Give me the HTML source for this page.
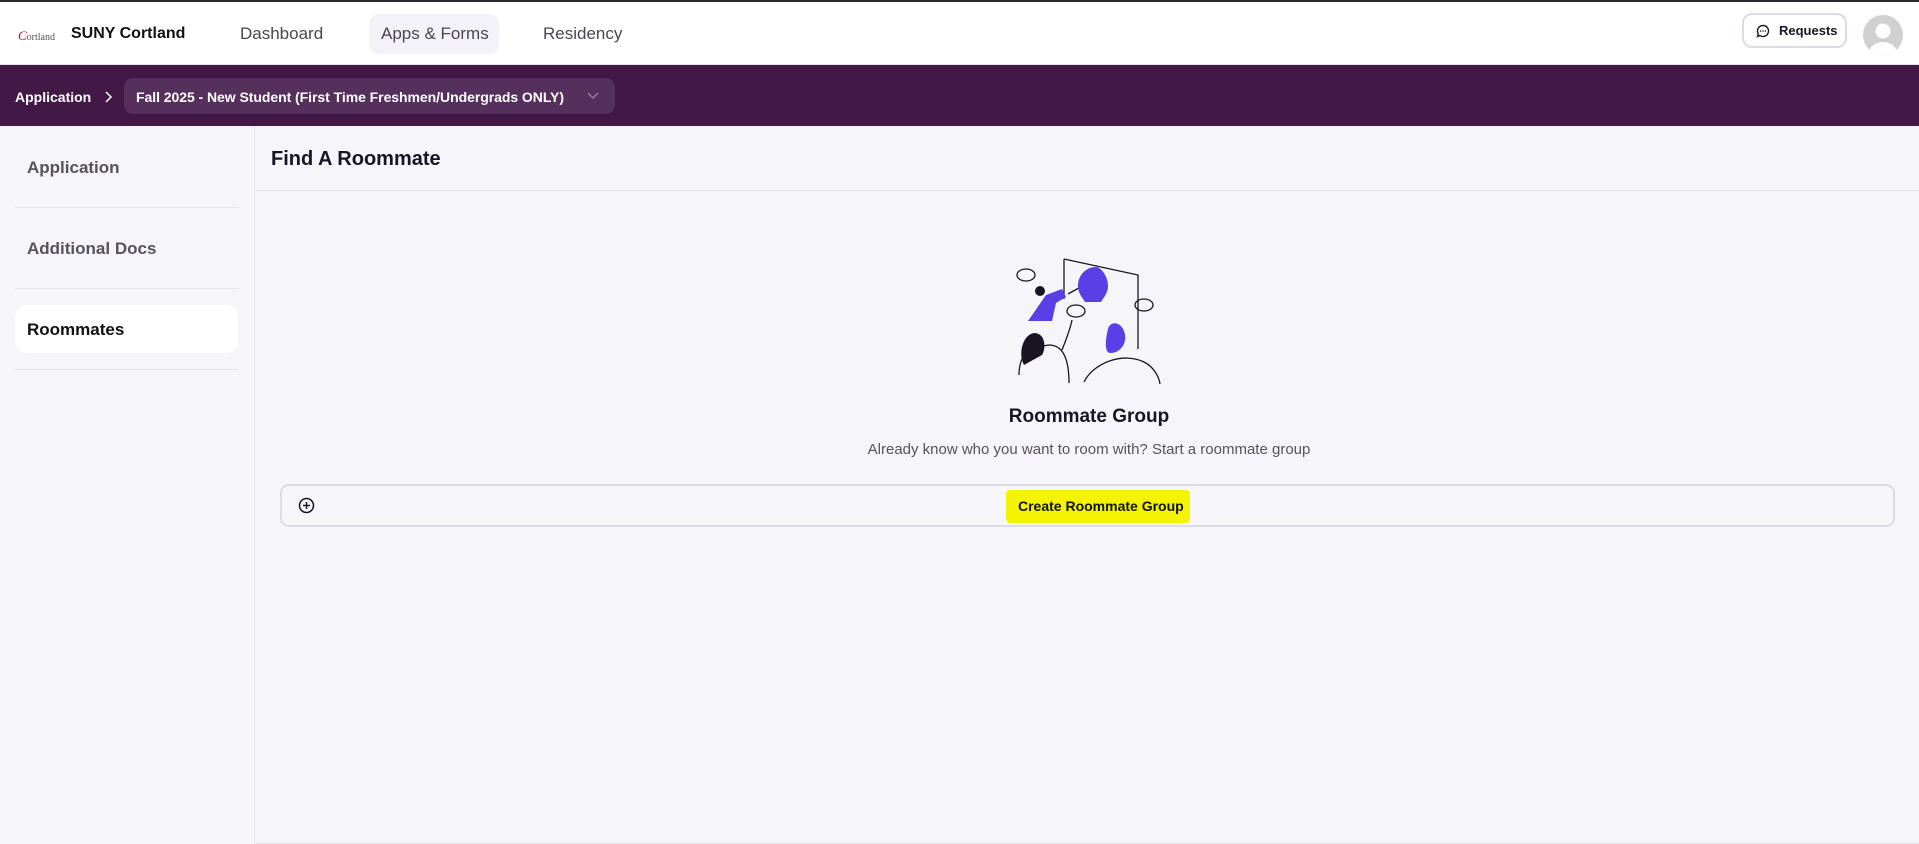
<!DOCTYPE html>
<html><head><meta charset="utf-8"><style>
*{box-sizing:border-box;margin:0;padding:0}
body{width:1919px;height:844px;overflow:hidden;background:#f5f5fa;font-family:"Liberation Sans",sans-serif;position:relative;color:#1a1523}
.top{position:absolute;left:0;top:0;width:1919px;height:65px;background:#fff;border-top:2px solid #2a2a2e;border-bottom:1px solid #e4e4ea}
.t{position:absolute;white-space:nowrap}
.purple{position:absolute;left:0;top:65px;width:1919px;height:61px;background:#421847}
.side{position:absolute;left:0;top:126px;width:255px;height:718px;border-right:1px solid #e4e4ea}
.line{position:absolute;height:1px;background:#e4e4ea}
</style></head><body>
<div class="top">
  <div class="t" style="left:18px;top:26px;font-family:'Liberation Serif',serif;font-size:10px;color:#555"><span style="color:#b0102a;font-style:italic;font-size:13px">C</span>ortland</div>
  <div class="t" style="left:71px;top:23px;font-size:16px;font-weight:bold;color:#111">SUNY Cortland</div>
  <div class="t" style="left:240px;top:22px;font-size:17px;color:#4a4550">Dashboard</div>
  <div style="position:absolute;left:369px;top:12px;width:130px;height:40px;border-radius:10px;background:#f3f2f8"></div>
  <div class="t" style="left:381px;top:22px;font-size:17px;color:#4a4550">Apps &amp; Forms</div>
  <div class="t" style="left:543px;top:22px;font-size:17px;color:#4a4550">Residency</div>
  <div style="position:absolute;left:1742px;top:11px;width:105px;height:35px;border:2px solid #dcdbe6;border-radius:10px;background:#fff"></div>
  <svg style="position:absolute;left:1756px;top:22px" width="14" height="14" viewBox="0 0 14 14"><path d="M7 1.5a5.5 5.5 0 1 1-3 10.1L1.5 12.5l.9-2.5A5.5 5.5 0 0 1 7 1.5z" fill="none" stroke="#1a1523" stroke-width="1.4"/><circle cx="4.6" cy="7" r=".8" fill="#1a1523"/><circle cx="7" cy="7" r=".8" fill="#1a1523"/><circle cx="9.4" cy="7" r=".8" fill="#1a1523"/></svg>
  <div class="t" style="left:1779px;top:21px;font-size:13px;font-weight:bold;color:#1a1523">Requests</div>
  <svg style="position:absolute;left:1863px;top:13px" width="40" height="40" viewBox="0 0 40 40"><defs><clipPath id="c"><circle cx="20" cy="20" r="20"/></clipPath></defs><circle cx="20" cy="20" r="20" fill="#d0d0d0"/><g clip-path="url(#c)" fill="#fff"><circle cx="20" cy="16" r="7.5"/><ellipse cx="20" cy="38" rx="14" ry="11"/></g></svg>
</div>
<div class="purple">
  <div class="t" style="left:15px;top:24px;font-size:14px;font-weight:bold;color:#fff">Application</div>
  <svg style="position:absolute;left:103px;top:26px" width="10" height="12" viewBox="0 0 10 12"><path d="M3 1l5 5-5 5" fill="none" stroke="#fff" stroke-width="1.5"/></svg>
  <div style="position:absolute;left:124px;top:13px;width:491px;height:36px;border-radius:9px;background:#55305c"></div>
  <div class="t" style="left:136px;top:24px;font-size:14px;font-weight:bold;color:#fff;letter-spacing:-0.05px">Fall 2025 - New Student (First Time Freshmen/Undergrads ONLY)</div>
  <svg style="position:absolute;left:587px;top:27px" width="12" height="8" viewBox="0 0 12 8"><path d="M1 1l5 5 5-5" fill="none" stroke="#9a86a0" stroke-width="1.3"/></svg>
</div>
<div class="side">
  <div class="t" style="left:27px;top:32px;font-size:17px;font-weight:bold;color:#57525c">Application</div>
  <div class="line" style="left:15px;top:81px;width:223px"></div>
  <div class="t" style="left:27px;top:113px;font-size:17px;font-weight:bold;color:#57525c">Additional Docs</div>
  <div class="line" style="left:15px;top:162px;width:223px"></div>
  <div style="position:absolute;left:15px;top:179px;width:223px;height:48px;border-radius:12px;background:#fff"></div>
  <div class="t" style="left:27px;top:194px;font-size:17px;font-weight:bold;color:#111">Roommates</div>
  <div class="line" style="left:15px;top:243px;width:223px"></div>
</div>
<div class="t" style="left:271px;top:148px;font-size:20px;font-weight:bold;color:#1a1523">Find A Roommate</div>
<div class="line" style="left:256px;top:190px;width:1663px"></div>
<svg style="position:absolute;left:1016px;top:255px" width="146" height="130" viewBox="0 0 146 130">
  <g fill="none" stroke="#1a1523" stroke-width="1.3">
    <path d="M48 4l74 16v74"/><path d="M48 4v40"/>
    <path d="M3 120c0-25 15-28 30-30 12 0 20 10 20 38"/><path d="M46 95c4-10 8-20 10-30"/>
    <path d="M68 127c10-20 40-30 60-20 10 5 15 15 16 22"/>
    <ellipse cx="10" cy="20" rx="9" ry="6"/><ellipse cx="60" cy="56" rx="9" ry="6"/><ellipse cx="128" cy="50" rx="9" ry="6"/>
    <path d="M52 39l18-10"/>
  </g>
  <path d="M80 12c-10 0-18 8-18 19 0 7 4 11 7 16h16c3-5 7-9 7-16 0-11-8-19-12-19z" fill="#5b3fe6"/>
  <path d="M30 40l16-6 4 8-10 6-4 18h-24z" fill="#5b3fe6"/>
  <circle cx="24" cy="36" r="5" fill="#1a1523"/>
  <path d="M8 110c-6-10-2-30 10-32 12 0 12 16 8 22z" fill="#1a1523"/>
  <path d="M92 74c2-8 12-8 16 2 4 10-2 22-14 22-4 0-6-8-2-24z" fill="#5b3fe6"/>
</svg>
<div class="t" style="left:0;width:2178px;text-align:center;top:406px;font-size:19px;font-weight:bold;color:#1a1523">Roommate Group</div>
<div class="t" style="left:0;width:2178px;text-align:center;top:441px;font-size:15px;color:#57525c">Already know who you want to room with? Start a roommate group</div>
<div style="position:absolute;left:280px;top:484px;width:1615px;height:43px;border:2px solid #dcdbe6;border-radius:9px;background:#f7f7fb"></div>
<svg style="position:absolute;left:298px;top:497px" width="17" height="17" viewBox="0 0 17 17"><circle cx="8.5" cy="8.5" r="7" fill="none" stroke="#1a1523" stroke-width="1.5"/><path d="M8.5 5v7M5 8.5h7" stroke="#1a1523" stroke-width="1.5"/></svg>
<div style="position:absolute;left:1006px;top:490px;width:184px;height:33px;background:#f4f400;border-radius:4px"></div>
<div class="t" style="left:1018px;top:498px;font-size:14px;font-weight:bold;color:#111">Create Roommate Group</div>
<div class="line" style="left:256px;top:843px;width:1663px"></div>
</body></html>
